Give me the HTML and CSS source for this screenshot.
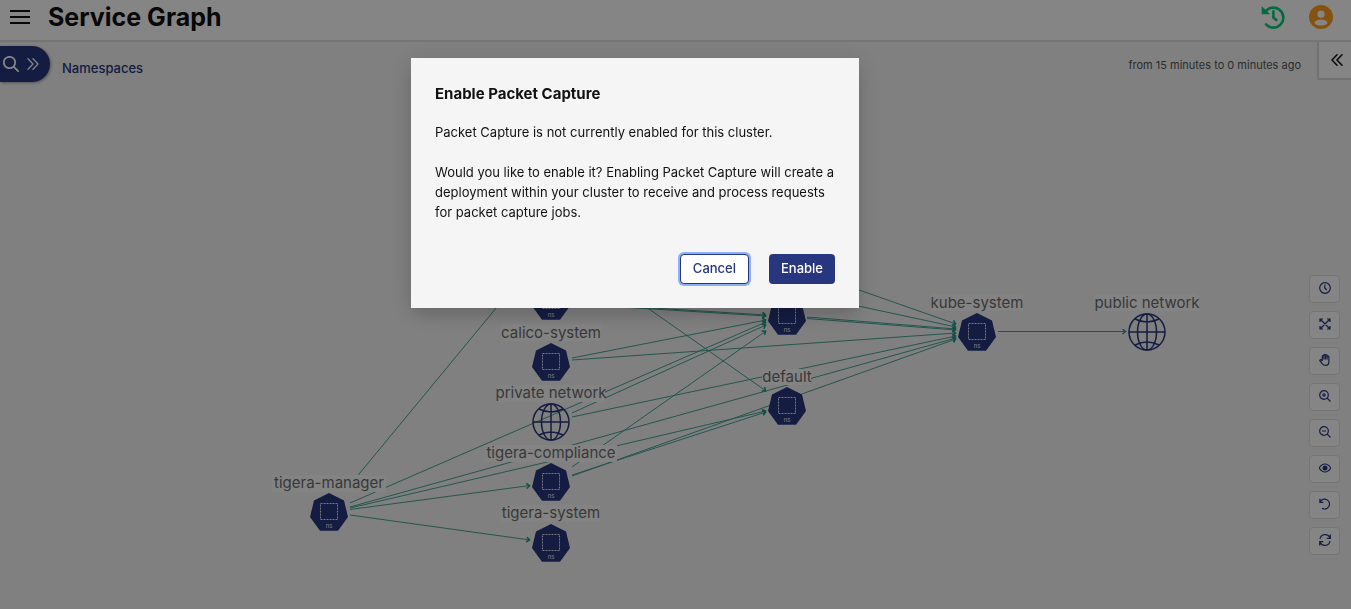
FILE: index.html
```html
<!DOCTYPE html>
<html lang="en">
<head>
<meta charset="utf-8">
<meta name="viewport" content="width=device-width, initial-scale=1">
<title>Service Graph</title>
<link rel="stylesheet" href="styles.css">
</head>
<body>
<div class="app">
  <header class="header">
    <button class="icon-button" type="button" aria-label="Menu">
      <svg width="20" height="16" viewBox="0 0 20 16" stroke="#111" stroke-width="2"><path d="M0 2H20M0 8H20M0 14H20"/></svg>
    </button>
    <h1 class="page-title">Service Graph</h1>
    <div class="header-actions">
      <button class="icon-button" type="button" aria-label="History">
        <svg width="24" height="24" viewBox="0 0 24 24" fill="none" stroke="#05d07b" stroke-width="2.6"><path d="M4 7.2A10 10 0 1 1 5 19.4" stroke-linecap="round"/><path d="M12.4 6.3V12.6L15.4 15" stroke-linecap="round"/><path d="M.6 1.2V9.2H9L6.4 6.6 3.2 3.6Z" fill="#05d07b" stroke="none"/></svg>
      </button>
      <button class="icon-button" type="button" aria-label="Account">
        <svg width="24" height="24" viewBox="0 0 24 24"><circle cx="12" cy="12" r="12" fill="#ff9d1e"/><circle cx="12" cy="9.2" r="3.6" fill="#fff"/><path d="M5.4 18C6.6 15.6 9 14.6 12 14.6S17.4 15.6 18.6 18C16.8 20 14.6 20.6 12 20.6S7.2 20 5.4 18Z" fill="#fff"/></svg>
      </button>
    </div>
  </header>
  <main class="workspace">
    <svg class="graph" viewBox="0 42 1351 567" role="img" aria-label="Namespace traffic graph">
      <defs>
        <marker id="arrow" viewBox="0 0 6 6" refX="5" refY="3" markerWidth="6" markerHeight="6" orient="auto" markerUnits="userSpaceOnUse"><path class="arrow-head" d="M1.5 .5 4.5 3 1.5 5.5"/></marker>
        <g id="ns">
          <path class="hull" d="M0-19 15-11.5 19 5 9 18.7H-9L-19 5-15-11.5Z"/>
          <rect class="dashed" x="-8.5" y="-8.5" width="17" height="16"/>
          <text class="kind" x="0" y="16">ns</text>
        </g>
        <g id="globe" class="globe">
          <circle r="18"/><ellipse rx="9.5" ry="18"/><path d="M0-18V18M-18 0H18M-12-13Q0-7 12-13M-12 13Q0 7 12 13"/>
        </g>
      </defs>
      <g class="edges">
        <path d="M350 485 530 267"/>
        <path d="M350 503 766 322"/>
        <path d="M350 507 956 338"/>
        <path d="M350 508 766 411"/>
        <path d="M350 509.500 530 485.500"/>
        <path d="M350 515 530 540"/>
        <path d="M572 358 766 320"/>
        <path d="M572 360 956 333"/>
        <path d="M572 413 766 325"/>
        <path d="M572 417 956 336"/>
        <path d="M572 467 766 331"/>
        <path d="M572 475 766 412"/>
        <path d="M572 476 956 339"/>
        <path d="M572 303 766 315"/>
        <path d="M572 304 766 316"/>
        <path d="M572 255 766 391"/>
        <path d="M807 317 956 329"/>
        <path d="M807 318.500 956 330"/>
        <path d="M802 270 956 324"/>
        <path d="M807 295 956 327"/>
        <path d="M998 331.500 1126 331.500"/>
      </g>
      <g class="labels-bg">
        <rect x="501" y="324" width="100" height="17"/>
        <rect x="497" y="385" width="108" height="17"/>
        <rect x="485" y="445" width="132" height="17"/>
        <rect x="501" y="505" width="99" height="17"/>
        <rect x="272" y="475" width="114" height="17"/>
        <rect x="762" y="369" width="49" height="16"/>
        <rect x="931" y="294" width="92" height="17"/>
        <rect x="1096" y="294" width="102" height="17"/>
      </g>
      <use href="#ns" x="551" y="301"/><use href="#ns" x="551" y="362"/>
      <use href="#ns" x="551" y="482"/><use href="#ns" x="551" y="543"/>
      <use href="#ns" x="787" y="316"/><use href="#ns" x="787" y="406"/>
      <use href="#ns" x="977" y="332"/><use href="#ns" x="329" y="512"/>
      <use href="#globe" x="551" y="422"/><use href="#globe" x="1147" y="332"/>
      <g class="labels">
        <text x="551" y="338">calico-system</text>
        <text x="551" y="398">private network</text>
        <text x="551" y="458">tigera-compliance</text>
        <text x="551" y="518">tigera-system</text>
        <text x="329" y="488">tigera-manager</text>
        <text x="787" y="382">default</text>
        <text x="977" y="308">kube-system</text>
        <text x="1147" y="308">public network</text>
      </g>
    </svg>
    <div class="topbar">
      <button class="search-pill" type="button" aria-label="Open search">
        <svg width="16" height="16" viewBox="0 0 16 16" fill="none" stroke="#fff" stroke-width="1.800" stroke-linecap="round"><circle cx="6.500" cy="6.500" r="5.700"/><path d="M10.800 10.800 15.200 15.200"/></svg>
        <svg width="12" height="12" viewBox="0 0 12 12" fill="none" stroke="#fff" stroke-width="1.300" stroke-linecap="round"><path d="M1 .8 6 6 1 11.200M6 .8 11 6 6 11.200"/></svg>
      </button>
      <a class="crumb" href="#">Namespaces</a>
      <span class="range">from 15 minutes to 0 minutes ago</span>
      <button class="collapse" type="button" aria-label="Open panel">
        <svg width="12" height="12" viewBox="0 0 12 12" fill="none" stroke="#111" stroke-width="1.500" stroke-linecap="round"><path d="M6 .8 1 6 6 11.200M11 .8 6 6 11 11.200"/></svg>
      </button>
    </div>
    <div class="tools">
      <button class="tool" type="button" aria-label="Time"><svg viewBox="0 0 12 12"><circle cx="6" cy="6" r="5.300"/><path d="M5.800 2.500V6.300L7.800 8"/></svg></button>
      <button class="tool" type="button" aria-label="Fit"><svg viewBox="0 0 12 12"><path d="M1 4V1H4M8 1H11V4M11 8V11H8M4 11H1V8M1 1 11 11M11 1 1 11"/></svg></button>
      <button class="tool" type="button" aria-label="Pan"><svg viewBox="0 0 12 12"><path d="M3.300 7V2.200Q3.300 1.300 4.100 1.300T4.900 2.200V5.500M4.900 5V1.300Q4.900.5 5.700.5T6.500 1.300V5.500M6.500 5V1.500Q6.500.8 7.300.8T8.100 1.600V5.500M8.100 5V3Q8.100 2.200 9 2.200T9.900 3V7.500Q9.900 11.400 6.700 11.400 4.200 11.400 3.300 9.800L1 7Q.6 6.200 1.300 5.800T2.500 6L3.300 7"/></svg></button>
      <button class="tool" type="button" aria-label="Zoom in"><svg viewBox="0 0 12 12"><circle cx="5" cy="5" r="4.300"/><path d="M8.200 8.200 11.500 11.500M3 5H7M5 3V7"/></svg></button>
      <button class="tool" type="button" aria-label="Zoom out"><svg viewBox="0 0 12 12"><circle cx="5" cy="5" r="4.300"/><path d="M8.200 8.200 11.500 11.500M3 5H7"/></svg></button>
      <button class="tool" type="button" aria-label="Show"><svg viewBox="0 0 12 12"><path d="M.2 6Q2.500 2 6 2T11.800 6Q9.500 10 6 10T.2 6Z"/><circle cx="6" cy="6" r="1.900" fill="#27367f"/></svg></button>
      <button class="tool" type="button" aria-label="Undo"><svg viewBox="0 0 12 12"><path d="M.9.8V4.300H4.400M1.200 4A4.900 4.900 0 1 1 3 10.200"/></svg></button>
      <button class="tool" type="button" aria-label="Refresh"><svg viewBox="0 0 12 12"><path d="M11.300.6V4.300H7.700M11 4A5.200 5.200 0 0 0 1 5M.7 11.400V7.700H4.300M1 8A5.200 5.200 0 0 0 11 7"/></svg></button>
    </div>
  </main>
</div>
<div class="overlay">
  <section class="dialog" role="dialog" aria-modal="true" aria-labelledby="dialog-title">
    <h2 class="dialog-title" id="dialog-title">Enable Packet Capture</h2>
    <p class="dialog-text">Packet Capture is not currently enabled for this cluster.</p>
    <p class="dialog-text">Would you like to enable it? Enabling Packet Capture will create a deployment within your cluster to receive and process requests for packet capture jobs.</p>
    <div class="dialog-actions">
      <button class="button button-outline" type="button">Cancel</button>
      <button class="button button-solid" type="button">Enable</button>
    </div>
  </section>
</div>
</body>
</html>
```

FILE: styles.css
```css
* { box-sizing: border-box; }
body {
  margin: 0;
  font-family: Inter, "Open Sans", sans-serif;
  font-size: 13px;
  font-weight: 500;
  color: #111;
  background: #f5f5f5;
}
button { font: inherit; margin: 0; padding: 0; border: 0; cursor: pointer; }
svg { display: block; }

.app { display: flex; flex-direction: column; height: 100vh; overflow: hidden; }

.header {
  display: flex;
  align-items: center;
  flex: none;
  gap: 18px;
  padding: 0 18px 6px 10px;
  background: #fff;
  border-bottom: 2px solid #e1e1e1;
}
.icon-button { background: none; }
.page-title { margin: 0; font-size: 25px; line-height: 34px; font-weight: 700; }
.header-actions { display: flex; gap: 24px; margin-left: auto; }

.workspace { position: relative; flex: 1; min-height: 0; }
.graph { position: absolute; inset: 0; width: 100%; height: 100%; }
.edges { fill: none; stroke: #45a594; stroke-width: 1; }
.edges path { marker-end: url(#arrow); }
.arrow-head { fill: none; stroke: #1f9c85; stroke-width: 1.5; }
.labels-bg { fill: #fcfcfc; }
.labels { font-size: 15px; font-weight: 400; fill: #6c6c6c; text-anchor: middle; }
.hull { fill: #27367f; }
.dashed { fill: none; stroke: #e4e6f0; stroke-width: 1; stroke-dasharray: 2 1; }
.kind { font-size: 6px; font-weight: 400; fill: #e4e6f0; text-anchor: middle; }
.globe { fill: none; stroke: #27367f; stroke-width: 1.5; }

.topbar { position: relative; display: flex; align-items: flex-start; }
.search-pill {
  display: flex;
  align-items: center;
  gap: 8px;
  height: 36px;
  margin-top: 4px;
  padding: 0 11px 0 3px;
  background: #27367f;
  border-radius: 0 18px 18px 0;
  box-shadow: 1px 1px 3px rgba(0, 0, 0, .35);
}
.crumb { margin: 16px 0 0 12px; line-height: 20px; color: #27367f; text-decoration: none; }
.range { margin: 13px 16px 0 auto; font-size: 11px; line-height: 20px; font-weight: 400; color: #555; }
.collapse {
  display: flex;
  align-items: center;
  justify-content: center;
  width: 34px;
  height: 38px;
  padding-left: 3px;
  background: #fff;
  border: solid #d8d8d8;
  border-width: 0 0 2px 2px;
}

.tools {
  position: absolute;
  right: 11px;
  bottom: 54px;
  display: grid;
  gap: 8px;
}
.tool {
  display: grid;
  place-items: center;
  width: 31px;
  height: 28px;
  padding-bottom: 2px;
  background: #fff;
  border: 1px solid #e1e1e1;
  border-radius: 4px;
}
.tool svg { width: 12px; height: 12px; fill: none; stroke: #27367f; stroke-width: 1.2; }

.overlay {
  position: fixed;
  inset: 0;
  display: flex;
  justify-content: center;
  align-items: flex-start;
  padding: 58px 81px 0 0;
  background: rgba(0, 0, 0, .48);
}
.dialog {
  width: 448px;
  max-width: 100%;
  padding: 24px;
  background: #f5f5f5;
  box-shadow: 0 10px 15px -3px rgba(0, 0, 0, .1), 0 4px 24px rgba(0, 0, 0, .15);
}
.dialog-title { margin: 0 0 16px; font-size: 15px; line-height: 24px; font-weight: 700; }
.dialog-text { margin: 0 0 20px; line-height: 20px; font-weight: 400; }
.dialog-actions { display: flex; justify-content: flex-end; gap: 20px; padding-top: 12px; }
.button { height: 30px; padding: 0 12px 2px; border-radius: 4px; }
.button-outline {
  color: #27367f;
  background: #fff;
  border: 1px solid #27367f;
  box-shadow: 0 0 0 2px #8bb0f8;
}
.button-solid { color: #fff; background: #27367f; }
```
